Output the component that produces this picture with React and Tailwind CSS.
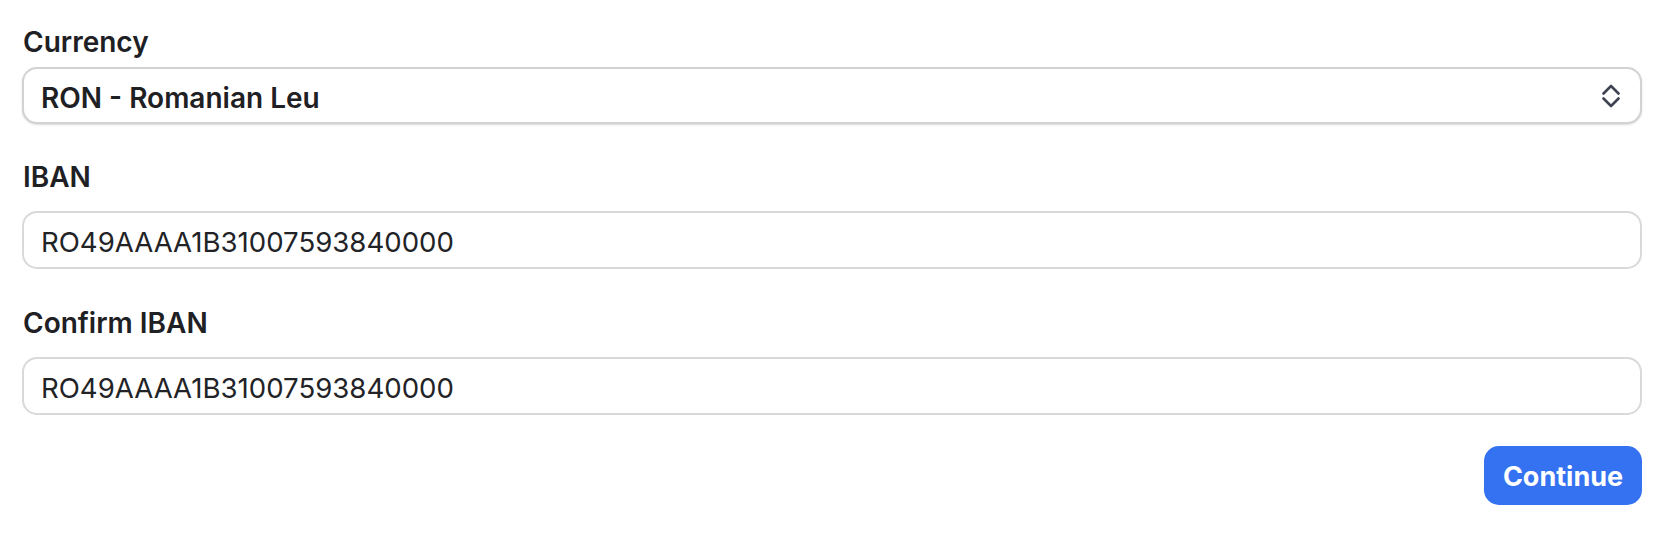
import { useState } from 'react'

const IBAN = 'RO49AAAA1B31007593840000'

function ChevronUpDown() {
  return (
    <svg width="18" height="24" viewBox="0 0 18 24" fill="none" stroke="#3d4350" strokeWidth="2.6" strokeLinecap="round" strokeLinejoin="round">
      <path d="M1.5 9.5 L9 2 L16.5 9.5" />
      <path d="M1.5 14.5 L9 22 L16.5 14.5" />
    </svg>
  )
}

function Field({ label, value, onChange, className }) {
  return (
    <div className={className}>
      <label className="block pl-[1px] text-[28px] font-semibold leading-[32px] text-[#1e2024]">{label}</label>
      <input
        value={value}
        onChange={(e) => onChange(e.target.value)}
        className="mt-[18px] block h-[58px] w-full rounded-[15px] border-2 border-[#d9d9d9] bg-white px-[17px] pt-[3px] text-[27.6px] text-[#222326] outline-none"
      />
    </div>
  )
}

export default function App() {
  const [iban, setIban] = useState(IBAN)
  const [confirm, setConfirm] = useState(IBAN)

  return (
    <div className="min-h-[544px] bg-white px-[22px] pt-[26px] font-['Inter','Noto_Sans',sans-serif]">
      <label className="block pl-[1px] text-[28px] font-semibold leading-[32px] text-[#1e2024]">Currency</label>
      <div className="mt-[9px] flex h-[57px] items-center justify-between rounded-[15px] border-2 border-[#d2d2d2] bg-white pl-[17px] pr-[20px] shadow-[0_1px_2px_rgba(0,0,0,0.15)]">
        <span className="pt-[4px] text-[28px] font-semibold text-[#1e2024]">RON - Romanian Leu</span>
        <ChevronUpDown />
      </div>

      <Field label="IBAN" value={iban} onChange={setIban} className="mt-[37px]" />
      <Field label="Confirm IBAN" value={confirm} onChange={setConfirm} className="mt-[38px]" />

      <div className="mt-[31px] flex justify-end">
        <button className="h-[59px] w-[158px] rounded-[15px] bg-[#3472f1] pt-[3px] text-[27px] font-bold text-white">
          Continue
        </button>
      </div>
    </div>
  )
}
